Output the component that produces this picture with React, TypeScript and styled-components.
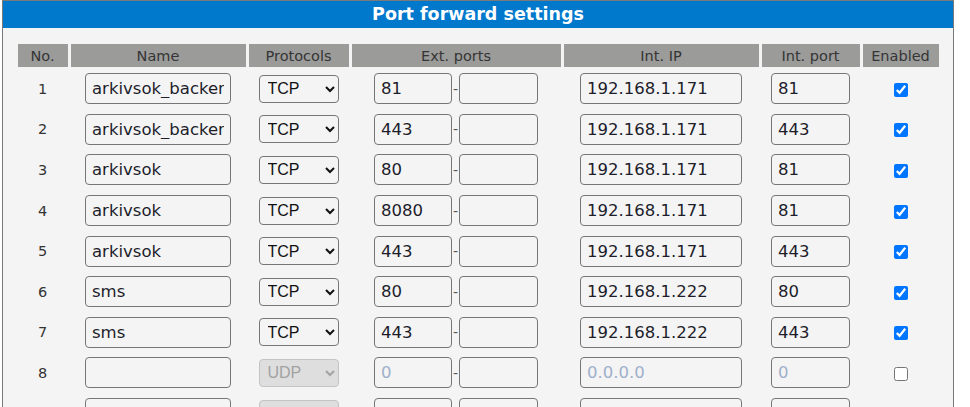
import React from "react";
import styled, { createGlobalStyle } from "styled-components";

const Global = createGlobalStyle`
  html, body { margin: 0; padding: 0; background: #ffffff; overflow: hidden; }
  body { font-family: "DejaVu Sans", Verdana, sans-serif; }
`;

const Panel = styled.div`
  width: 950px;
  margin-left: 2px;
  border: 1px solid #7a7a7a;
  border-bottom: none;
  background: #f4f4f4;
  min-height: 420px;
`;

const Title = styled.div`
  height: 27px;
  background: #0078cc;
  color: #ffffff;
  font-family: "DejaVu Sans", Verdana, sans-serif;
  font-weight: bold;
  font-size: 17.5px;
  line-height: 27px;
  text-align: center;
`;

const Table = styled.table`
  margin: 13px auto 0;
  width: 927px;
  table-layout: fixed;
  border-collapse: separate;
  border-spacing: 3px;
`;

const Th = styled.th`
  background: #9b9b9a;
  color: #353535;
  font-weight: normal;
  font-size: 14.5px;
  height: 23px;
  padding: 0;
  text-align: center;
  white-space: nowrap;
  overflow: hidden;
`;

const Td = styled.td`
  height: 37.6px;
  padding: 0;
  text-align: center;
  vertical-align: middle;
  font-size: 14.5px;
  color: #333;
`;

const TextInput = styled.input<{ $w: number }>`
  box-sizing: border-box;
  width: ${(p) => p.$w}px;
  height: 31px;
  margin: 0;
  padding: 0 6px;
  border: 1px solid #767676;
  border-radius: 4px;
  background: transparent;
  font-family: "DejaVu Sans", Verdana, sans-serif;
  font-size: 16.5px;
  color: #1d1d2b;
  vertical-align: middle;
  &::placeholder { color: #9fb0cb; opacity: 1; }
`;

const Select = styled.select`
  box-sizing: border-box;
  width: 80px;
  height: 28px;
  margin: 0;
  padding: 0 2px 0 4px;
  border: 1px solid #767676;
  border-radius: 4px;
  background-color: transparent;
  font-family: "Liberation Sans", Arial, sans-serif;
  font-size: 16px;
  color: #111;
  vertical-align: middle;
  &:disabled {
    background-color: #dedede;
    border-color: #c4c4c4;
    color: #a2a2a2;
    opacity: 1;
  }
`;

const PortGroup = styled.div`
  display: inline-flex;
  align-items: center;
  vertical-align: middle;
`;

const Dash = styled.span`
  font-size: 14px;
  color: #555;
  width: 7px;
  text-align: center;
`;

const Check = styled.input`
  width: 14px;
  height: 14px;
  margin: 0;
  vertical-align: middle;
`;

type Row = {
  name: string;
  proto: string;
  ext: string;
  ip: string;
  port: string;
  on: boolean;
  used: boolean;
};

const rows: Row[] = [
  { name: "arkivsok_backend", proto: "TCP", ext: "81", ip: "192.168.1.171", port: "81", on: true, used: true },
  { name: "arkivsok_backend", proto: "TCP", ext: "443", ip: "192.168.1.171", port: "443", on: true, used: true },
  { name: "arkivsok", proto: "TCP", ext: "80", ip: "192.168.1.171", port: "81", on: true, used: true },
  { name: "arkivsok", proto: "TCP", ext: "8080", ip: "192.168.1.171", port: "81", on: true, used: true },
  { name: "arkivsok", proto: "TCP", ext: "443", ip: "192.168.1.171", port: "443", on: true, used: true },
  { name: "sms", proto: "TCP", ext: "80", ip: "192.168.1.222", port: "80", on: true, used: true },
  { name: "sms", proto: "TCP", ext: "443", ip: "192.168.1.222", port: "443", on: true, used: true },
  { name: "", proto: "UDP", ext: "", ip: "", port: "", on: false, used: false },
  { name: "", proto: "UDP", ext: "", ip: "", port: "", on: false, used: false },
];

export default function App() {
  return (
    <>
      <Global />
      <Panel>
        <Title>Port forward settings</Title>
        <Table>
          <colgroup>
            <col style={{ width: 50 }} />
            <col style={{ width: 175 }} />
            <col style={{ width: 100 }} />
            <col style={{ width: 209 }} />
            <col style={{ width: 195 }} />
            <col style={{ width: 98 }} />
            <col style={{ width: 76 }} />
          </colgroup>
          <thead>
            <tr>
              <Th>No.</Th>
              <Th>Name</Th>
              <Th>Protocols</Th>
              <Th>Ext. ports</Th>
              <Th>Int. IP</Th>
              <Th>Int. port</Th>
              <Th>Enabled</Th>
            </tr>
          </thead>
          <tbody>
            {rows.map((r, i) => (
              <tr key={i}>
                <Td>{i + 1}</Td>
                <Td>
                  <TextInput $w={146} defaultValue={r.name} />
                </Td>
                <Td>
                  <Select defaultValue={r.proto} disabled={!r.used}>
                    <option>TCP</option>
                    <option>UDP</option>
                  </Select>
                </Td>
                <Td>
                  <PortGroup>
                    <TextInput $w={78} defaultValue={r.ext} placeholder={r.used ? "" : "0"} />
                    <Dash>-</Dash>
                    <TextInput $w={79} defaultValue="" />
                  </PortGroup>
                </Td>
                <Td>
                  <TextInput $w={162} defaultValue={r.ip} placeholder={r.used ? "" : "0.0.0.0"} />
                </Td>
                <Td>
                  <TextInput $w={79} defaultValue={r.port} placeholder={r.used ? "" : "0"} />
                </Td>
                <Td>
                  <Check type="checkbox" defaultChecked={r.on} />
                </Td>
              </tr>
            ))}
          </tbody>
        </Table>
      </Panel>
    </>
  );
}
